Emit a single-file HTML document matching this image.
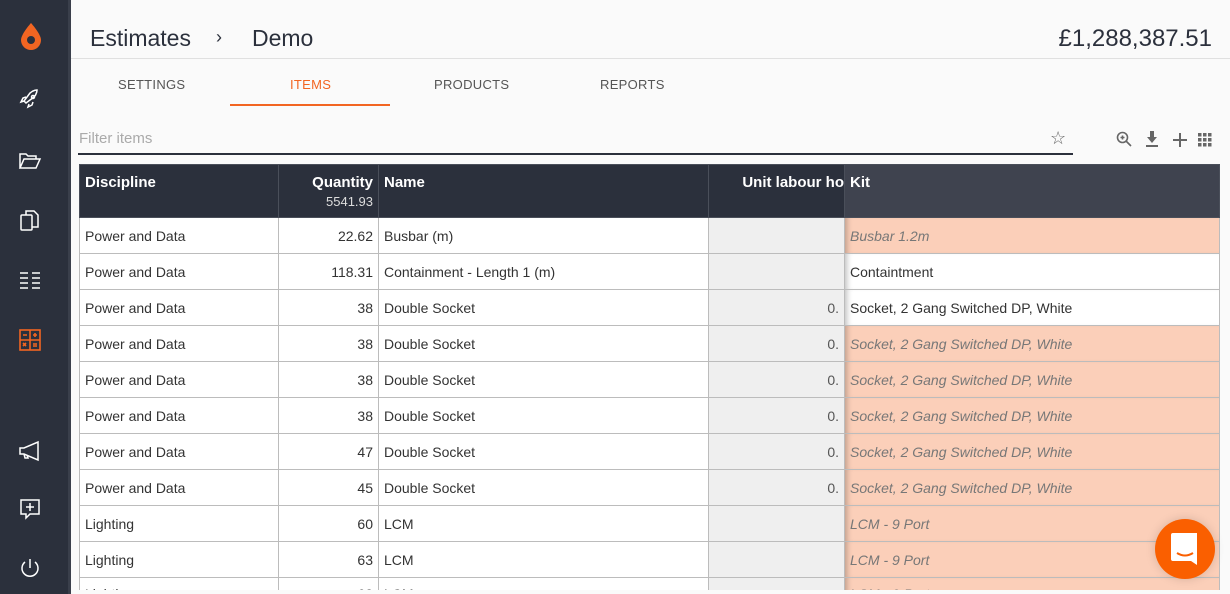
<!DOCTYPE html>
<html><head><meta charset="utf-8"><style>
*{box-sizing:border-box;margin:0;padding:0}
body{width:1230px;height:594px;overflow:hidden;background:#fafafa;font-family:"Liberation Sans",sans-serif;position:relative}
.sb{position:absolute;left:0;top:0;width:68px;height:594px;background:#2b303c}
.sb2{position:absolute;left:68px;top:0;width:3px;height:594px;background:#3a3f4b}
.ic{position:absolute;left:18px}
.t{position:absolute;color:#2b303c}
table{position:absolute;left:79px;top:164px;border-collapse:collapse;table-layout:fixed;width:1140px;font-size:14px;color:#333}
td,th{border:1px solid #bcbcbc;height:36px;padding:0 5px;white-space:nowrap;overflow:hidden}
th{background:#2b303c;color:#fff;height:53px;vertical-align:top;text-align:left;padding-top:9px;font-size:15px;border-color:#4a4f5a}
th.k{background:#3f434f}
.r{text-align:right}
td.g{background:#efefef;text-align:right;color:#555}
td.k{box-shadow:inset 6px 0 6px -4px rgba(0,0,0,.25)}
td.o{background:#fbcfb9;color:#777;font-style:italic}
td.w{background:#fff}
tr td:nth-child(-n+3){background:#fff}
</style></head><body>
<div class="sb"></div><div class="sb2"></div>
<svg class="ic" style="top:22px" width="26" height="28" viewBox="0 0 26 28"><path d="M13 1C13 1 3 12 3 18a10 10 0 0 0 20 0C23 12 13 1 13 1z" fill="#f26522"/><circle cx="13" cy="18" r="4" fill="#2b303c"/></svg>
<svg class="ic" style="top:88px" width="24" height="24" viewBox="0 0 24 24" fill="none" stroke="#fff" stroke-width="1.5"><path d="M8 15l-2-2 6-8c3-3 7-3 7-3s0 4-3 7l-8 6zM6 13l-3 1 2-4 3-1M11 16l-1 3 4-2 1-3"/><circle cx="15" cy="9" r="1.5"/></svg>
<svg class="ic" style="top:150px" width="24" height="22" viewBox="0 0 24 22" fill="none" stroke="#fff" stroke-width="1.5"><path d="M2 18V4h6l2 2h8v3M2 18l4-9h16l-4 9z"/></svg>
<svg class="ic" style="top:209px" width="24" height="24" viewBox="0 0 24 24" fill="none" stroke="#fff" stroke-width="1.5"><rect x="3" y="6" width="11" height="15" rx="1"/><path d="M8 6V2h8l4 4v12h-6"/></svg>
<svg class="ic" style="top:270px" width="24" height="20" viewBox="0 0 24 20" stroke="#fff" stroke-width="1.5"><path d="M2 3h8M14 3h8M2 8h8M14 8h8M2 13h8M14 13h8M2 18h8M14 18h8"/></svg>
<svg class="ic" style="top:328px" width="24" height="24" viewBox="0 0 24 24" fill="none" stroke="#f26522" stroke-width="1.6"><rect x="2" y="2" width="20" height="20"/><path d="M12 2v20M2 12h20M5 7h4M15 7h4M17 5v4M5 15l3 3M8 15l-3 3M15 16h4M15 18h4"/></svg>
<svg class="ic" style="top:440px" width="24" height="22" viewBox="0 0 24 22" fill="none" stroke="#fff" stroke-width="1.5"><path d="M2 8h4l14-6v18L6 14H2zM6 14l1 4h3l-1-3"/></svg>
<svg class="ic" style="top:497px" width="24" height="24" viewBox="0 0 24 24" fill="none" stroke="#fff" stroke-width="1.5"><path d="M3 3h18v14H12l-4 4v-4H3z"/><path d="M12 6v8M8 10h8"/></svg>
<svg class="ic" style="top:557px" width="24" height="24" viewBox="0 0 24 24" fill="none" stroke="#fff" stroke-width="1.5"><path d="M12 2v9M7 5a8 8 0 1 0 10 0"/></svg>

<div class="t" style="left:90px;top:25px;font-size:23px">Estimates</div>
<div class="t" style="left:216px;top:27px;font-size:18px">›</div>
<div class="t" style="left:252px;top:25px;font-size:23px">Demo</div>
<div class="t" style="right:18px;top:25px;font-size:24px">£1,288,387.51</div>
<div style="position:absolute;left:71px;top:58px;width:1159px;height:1px;background:#e0e0e0"></div>
<div class="t" style="left:118px;top:77px;font-size:13px;color:#555;letter-spacing:.3px">SETTINGS</div>
<div class="t" style="left:290px;top:77px;font-size:13px;color:#f26522;letter-spacing:.3px">ITEMS</div>
<div style="position:absolute;left:230px;top:104px;width:160px;height:2px;background:#f26522"></div>
<div class="t" style="left:434px;top:77px;font-size:13px;color:#555;letter-spacing:.3px">PRODUCTS</div>
<div class="t" style="left:600px;top:77px;font-size:13px;color:#555;letter-spacing:.3px">REPORTS</div>
<div class="t" style="left:79px;top:130px;font-size:15px;color:#aaa">Filter items</div>
<div style="position:absolute;left:78px;top:153px;width:995px;height:2px;background:#2b303c"></div>
<div class="t" style="left:1050px;top:128px;font-size:18px;color:#666">☆</div>
<svg style="position:absolute;left:1116px;top:131px" width="16" height="16" viewBox="0 0 16 16" fill="none" stroke="#666" stroke-width="1.6"><circle cx="6.5" cy="6.5" r="5"/><path d="M10 10l5 5M4.5 6.5h4M6.5 4.5v4"/></svg>
<svg style="position:absolute;left:1145px;top:131px" width="14" height="16" viewBox="0 0 14 16" fill="#666"><path d="M5 0h4v6h3l-5 6-5-6h3z"/><rect x="1" y="14" width="12" height="2"/></svg>
<svg style="position:absolute;left:1173px;top:133px" width="14" height="14" viewBox="0 0 14 14" stroke="#666" stroke-width="2"><path d="M7 0v14M0 7h14"/></svg>
<svg style="position:absolute;left:1198px;top:133px" width="14" height="14" viewBox="0 0 14 14" fill="#666"><rect x="0" y="0" width="3.5" height="3.5"/><rect x="5" y="0" width="3.5" height="3.5"/><rect x="10" y="0" width="3.5" height="3.5"/><rect x="0" y="5" width="3.5" height="3.5"/><rect x="5" y="5" width="3.5" height="3.5"/><rect x="10" y="5" width="3.5" height="3.5"/><rect x="0" y="10" width="3.5" height="3.5"/><rect x="5" y="10" width="3.5" height="3.5"/><rect x="10" y="10" width="3.5" height="3.5"/></svg>

<div style="position:absolute;left:79px;top:164px;width:1141px;height:426px;overflow:hidden">
<table style="left:0;top:0">
<colgroup><col style="width:199px"><col style="width:100px"><col style="width:330px"><col style="width:136px"><col style="width:375px"></colgroup>
<tr><th>Discipline</th><th class="r">Quantity<div style="font-size:13px;font-weight:normal;color:#ddd;margin-top:3px">5541.93</div></th><th>Name</th><th class="r" style="padding-right:0">Unit labour ho</th><th class="k">Kit</th></tr>
<tr><td>Power and Data</td><td class="r">22.62</td><td>Busbar (m)</td><td class="g"></td><td class="k o">Busbar 1.2m</td></tr>
<tr><td>Power and Data</td><td class="r">118.31</td><td>Containment - Length 1 (m)</td><td class="g"></td><td class="k w">Containtment</td></tr>
<tr><td>Power and Data</td><td class="r">38</td><td>Double Socket</td><td class="g">0.</td><td class="k w">Socket, 2 Gang Switched DP, White</td></tr>
<tr><td>Power and Data</td><td class="r">38</td><td>Double Socket</td><td class="g">0.</td><td class="k o">Socket, 2 Gang Switched DP, White</td></tr>
<tr><td>Power and Data</td><td class="r">38</td><td>Double Socket</td><td class="g">0.</td><td class="k o">Socket, 2 Gang Switched DP, White</td></tr>
<tr><td>Power and Data</td><td class="r">38</td><td>Double Socket</td><td class="g">0.</td><td class="k o">Socket, 2 Gang Switched DP, White</td></tr>
<tr><td>Power and Data</td><td class="r">47</td><td>Double Socket</td><td class="g">0.</td><td class="k o">Socket, 2 Gang Switched DP, White</td></tr>
<tr><td>Power and Data</td><td class="r">45</td><td>Double Socket</td><td class="g">0.</td><td class="k o">Socket, 2 Gang Switched DP, White</td></tr>
<tr><td>Lighting</td><td class="r">60</td><td>LCM</td><td class="g"></td><td class="k o">LCM - 9 Port</td></tr>
<tr><td>Lighting</td><td class="r">63</td><td>LCM</td><td class="g"></td><td class="k o">LCM - 9 Port</td></tr>
<tr><td style="vertical-align:top;padding-top:8px">Lighting</td><td class="r" style="vertical-align:top;padding-top:8px">60</td><td style="vertical-align:top;padding-top:8px">LCM</td><td class="g"></td><td class="k o" style="vertical-align:top;padding-top:8px">LCM - 9 Port</td></tr>
</table></div>
<div style="position:absolute;left:1155px;top:519px;width:60px;height:60px;border-radius:50%;background:#fa5f00;box-shadow:0 0 10px rgba(0,0,0,.15)"></div>
<svg style="position:absolute;left:1171px;top:533px" width="28" height="32" viewBox="0 0 28 32"><path d="M2 0h24v32l-6-4H2a2 2 0 0 1-2-2V2a2 2 0 0 1 2-2z" fill="#fff"/><path d="M6 20q8 5 16 0" stroke="#fa5f00" stroke-width="2" fill="none"/></svg>
</body></html>
